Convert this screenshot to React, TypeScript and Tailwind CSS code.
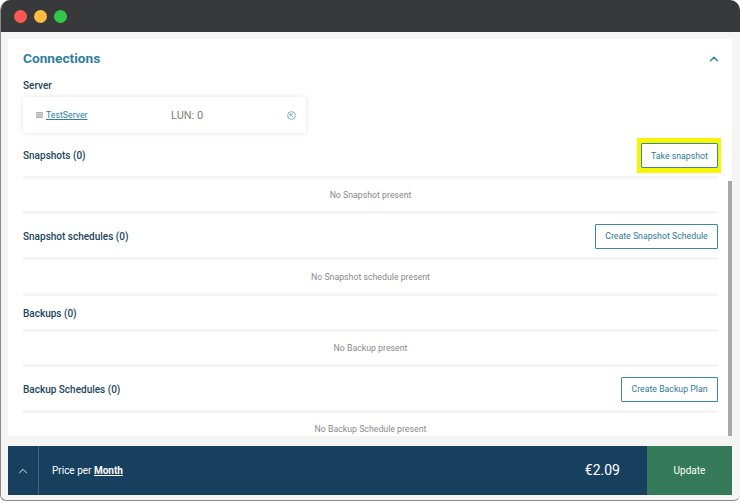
import { ChevronUp } from 'lucide-react';

type Section = {
    title: string;
    empty: string;
    action?: string;
    actionWidth?: string;
    highlight?: boolean;
    rowClass: string;
    emptyClass: string;
};

const sections: Section[] = [
    { title: 'Snapshots (0)', empty: 'No Snapshot present', action: 'Take snapshot', actionWidth: 'w-[77px]', highlight: true, rowClass: 'h-[41px] pb-[3px]', emptyClass: 'h-[35px] border-b-[3px]' },
    { title: 'Snapshot schedules (0)', empty: 'No Snapshot schedule present', action: 'Create Snapshot Schedule', actionWidth: 'w-[123px]', rowClass: 'h-[46px] pt-[1px]', emptyClass: 'h-[36px] border-b-[3px]' },
    { title: 'Backups (0)', empty: 'No Backup present', rowClass: 'h-[36px] pt-[1px]', emptyClass: 'h-[35px] border-b-[3px]' },
    { title: 'Backup Schedules (0)', empty: 'No Backup Schedule present', action: 'Create Backup Plan', actionWidth: 'w-[97px]', rowClass: 'h-[46px] pt-[1px]', emptyClass: 'h-[32px]' },
];

function ActionButton({ label, width, highlight }: { label: string; width?: string; highlight?: boolean }) {
    const button = (
        <button className={`${width} h-[25px] shrink-0 whitespace-nowrap pt-[2px] border border-[#3d87a3] rounded-[1px] bg-white text-[8.75px] text-[#2f7a98]`}>
            {label}
        </button>
    );
    if (!highlight) return button;
    return (
        <div className="flex items-center justify-center h-[35px] -mr-[3px] border-y-[5px] border-l-[4px] border-r-[3px] border-[#f6f600] bg-white">
            {button}
        </div>
    );
}

export default function App() {
    return (
        <div className="w-[740px] h-[503px] bg-white overflow-hidden font-['Roboto',sans-serif]">
            <div className="relative flex flex-col w-full h-[501px] rounded-t-[10px] rounded-b-[6px] overflow-hidden bg-[#f5f5f5] border-l border-b border-[#8a8a8a]">
                <div className="flex items-center gap-[7px] h-[32px] shrink-0 pl-[13px] bg-[#38393b]">
                    <span className="w-[13px] h-[13px] rounded-full bg-[#fc5753]" />
                    <span className="w-[13px] h-[13px] rounded-full bg-[#fdbc40]" />
                    <span className="w-[13px] h-[13px] rounded-full bg-[#33c748]" />
                </div>

                <div className="relative mt-[7px] ml-[7px] w-[724px] h-[397px] shrink-0 bg-white overflow-hidden pl-[15px] pr-[14px]">
                    <div className="flex items-center justify-between h-[40px]">
                        <h2 className="mb-[2px] text-[13.7px] font-bold text-[#2f7f9f]">Connections</h2>
                        <ChevronUp size={14} strokeWidth={2.5} className="-mr-[3px] text-[#2f7f9f]" />
                    </div>
                    <p className="mt-[1px] text-[10px] leading-[12px] font-medium text-[#1a4560]">Server</p>
                    <div className="flex items-center w-[283px] h-[36px] mt-[5px] pl-[13px] rounded-[2px] bg-white shadow-[0_0_5px_rgba(0,0,0,0.12)]">
                        <div className="flex items-center gap-[3px] w-[135px]">
                            <svg width="7" height="6" viewBox="0 0 7 6" className="shrink-0">
                                <rect x="0" y="0" width="7" height="1.6" fill="#b0b0b0" />
                                <rect x="0" y="2.2" width="7" height="1.6" fill="#b0b0b0" />
                                <rect x="0" y="4.4" width="7" height="1.6" fill="#b0b0b0" />
                            </svg>
                            <a className="pt-[2px] text-[8.75px] underline text-[#2f7f9f]">TestServer</a>
                        </div>
                        <span className="pt-[2px] w-[116px] text-[11px] text-[#808080]">LUN: 0</span>
                        <svg width="9" height="9" viewBox="0 0 9 9" fill="none" stroke="#5fa5bd" strokeWidth="0.8">
                            <circle cx="4.5" cy="4.5" r="3.9" />
                            <path d="M3 3h2.6M3 3v2.6M3 3l3.2 3.2" />
                        </svg>
                    </div>

                    <div className="mt-[5px]">
                        {sections.map((s) => (
                            <div key={s.title}>
                                <div className={`flex items-center justify-between ${s.rowClass} border-b-[3px] border-[#f5f5f5]`}>
                                    <h3 className="text-[10px] font-medium text-[#1a4560]">{s.title}</h3>
                                    {s.action && <ActionButton label={s.action} width={s.actionWidth} highlight={s.highlight} />}
                                </div>
                                <div className={`flex items-center justify-center pt-[2px] ${s.emptyClass} border-[#f5f5f5] text-[8.75px] text-[#8a8a8a]`}>
                                    {s.empty}
                                </div>
                            </div>
                        ))}
                    </div>

                    <div className="absolute right-0 top-[142px] bottom-0 w-[4px] bg-[#a9a9a9]" />
                </div>

                <div className="flex items-stretch ml-[7px] mt-[10px] w-[724px] h-[49px] shrink-0 bg-[#17405f] text-white">
                    <div className="flex items-center justify-center w-[31px] border-r border-[#3f6780]">
                        <ChevronUp size={14} strokeWidth={1.5} />
                    </div>
                    <div className="flex items-center flex-1 pl-[13px] text-[10px]">
                        Price per&nbsp;<span className="font-bold underline">Month</span>
                    </div>
                    <div className="flex items-center pr-[27px] text-[14px]">€2.09</div>
                    <button className="w-[85px] bg-[#33795a] text-[10px]">Update</button>
                </div>
            </div>
        </div>
    );
}
